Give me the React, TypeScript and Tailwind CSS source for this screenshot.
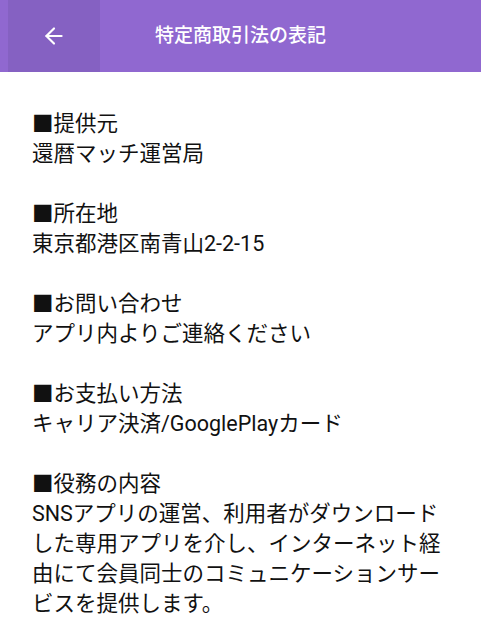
import { ArrowLeft } from "lucide-react"

const sections = [
  { title: "■提供元", body: "還暦マッチ運営局" },
  { title: "■所在地", body: "東京都港区南青山2-2-15" },
  { title: "■お問い合わせ", body: "アプリ内よりご連絡ください" },
  { title: "■お支払い方法", body: "キャリア決済/GooglePlayカード" },
  {
    title: "■役務の内容",
    body: "SNSアプリの運営、利用者がダウンロードした専用アプリを介し、インターネット経由にて会員同士のコミュニケーションサービスを提供します。",
  },
]

export default function App() {
  return (
    <div
      className="min-h-[632px] bg-white"
      style={{ fontFamily: 'Roboto, "Noto Sans CJK JP", sans-serif' }}
    >
      {/* App bar */}
      <div className="relative flex h-[72px] items-center justify-center bg-[#9068d0]">
        <button className="absolute left-[8px] top-0 flex h-full w-[92px] items-center justify-center bg-[#8561c2]">
          <ArrowLeft className="h-[26px] w-[26px] text-white" strokeWidth={2} />
        </button>
        <h1 className="text-[19px] font-medium text-white">特定商取引法の表記</h1>
      </div>

      {/* Content */}
      <div className="px-[32px] pt-[37px] text-[21.5px] leading-[30px] text-[#111]">
        {sections.map((s) => (
          <div key={s.title} className="mb-[30px]">
            <p>{s.title}</p>
            <p>{s.body}</p>
          </div>
        ))}
      </div>
    </div>
  )
}
